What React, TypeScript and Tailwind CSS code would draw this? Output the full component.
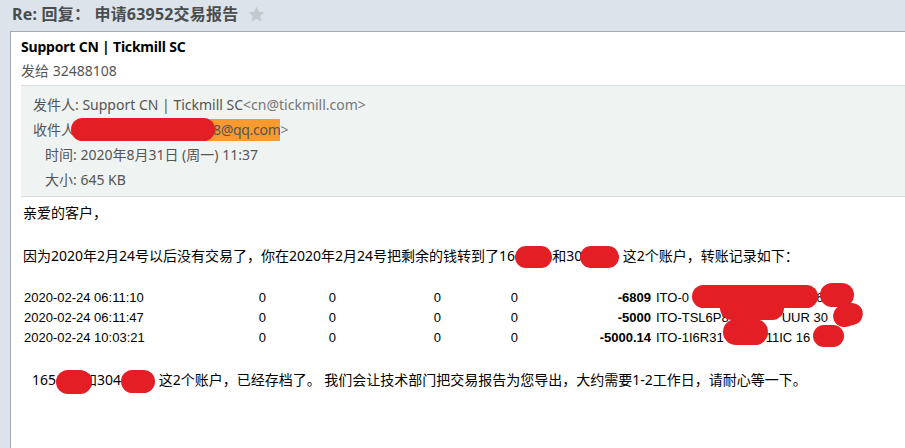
import React from 'react';

type Row = {
  time: string;
  amount: string;
  ref: React.ReactNode;
};

const ROWS: Row[] = [
  {
    time: '2020-02-24 06:11:10',
    amount: '-6809',
    ref: (
      <>
        ITO-0<span className="inline-block w-[120px]" />16
      </>
    ),
  },
  {
    time: '2020-02-24 06:11:47',
    amount: '-5000',
    ref: (
      <>
        ITO-TSL6P8<span className="inline-block w-[53px]" />UUR 30
      </>
    ),
  },
  {
    time: '2020-02-24 10:03:21',
    amount: '-5000.14',
    ref: (
      <>
        ITO-1I6R31<span className="inline-block w-[42px]" />11IC 16
      </>
    ),
  },
];

// inline red marker blob that hides part of a line
const Redact: React.FC<{ className?: string }> = ({ className = '' }) => (
  <span className={`inline-block align-middle rounded-full bg-[#e41e25] ${className}`} />
);

const StarIcon = () => (
  <svg viewBox="0 0 24 24" className="w-[17px] h-[17px]">
    <path
      d="M12 1.8l3.1 6.6 7.1.9-5.2 4.9 1.3 7.1L12 17.8l-6.3 3.5 1.3-7.1-5.2-4.9 7.1-.9z"
      fill="#c4c9ce"
      stroke="#c4c9ce"
      strokeWidth="1"
      strokeLinejoin="round"
    />
  </svg>
);

export default function App() {
  return (
    <div className="relative w-[905px] h-[448px] overflow-hidden bg-[#dce3ea] font-['Noto_Sans','Noto_Sans_CJK_SC',sans-serif] text-[14px]">
      {/* subject bar */}
      <div className="h-[31px] flex items-center pl-[12px] pb-[3px] gap-[10px]">
        <h1 className="text-[16px] font-bold text-[#4a4d50] leading-none whitespace-pre tracking-[0.2px]">Re: 回复： 申请63952交易报告</h1>
        <StarIcon />
      </div>

      {/* mail card */}
      <div className="ml-[10px] h-[417px] bg-white border-l border-t border-[#a2a9af]">
        <div className="pl-[10px] pt-[5px]">
          <div className="leading-[20px] font-bold text-black tracking-[-0.2px]">Support CN | Tickmill SC</div>
          <div className="leading-[20px] mt-[4px] text-[#555]">发给 32488108</div>
        </div>

        {/* header details */}
        <div className="ml-[10px] mt-[4px] pt-[6px] pb-[4px] bg-[#eff3f2] border-y border-[#d9dddd] text-[#555]">
          <div className="h-[25px] flex items-center pl-[12px] whitespace-pre">
            发件人: Support CN | Tickmill SC<span className="text-[#777]">&lt;cn@tickmill.com&gt;</span>
          </div>
          <div className="h-[25px] flex items-center pl-[12px] whitespace-pre">
            收件人
            <Redact className="relative z-10 w-[144px] h-[23px] -ml-[4px] -mr-[59px]" />
            <span className="h-[22px] leading-[22px] pl-[57px] bg-[#f99a30] tracking-[-0.3px]">8@qq.com</span>
            <span className="text-[#777]">&gt;</span>
          </div>
          <div className="h-[25px] flex items-center pl-[24px] whitespace-pre">时间: 2020年8月31日 (周一) 11:37</div>
          <div className="h-[25px] flex items-center pl-[24px] whitespace-pre">大小: 645 KB</div>
        </div>

        {/* body */}
        <div className="pl-[12px] pt-[6px] text-black">
          <p className="leading-[20px]">亲爱的客户，</p>
          <p className="leading-[20px] mt-[23px] whitespace-pre">
            因为2020年2月24号以后没有交易了，你在2020年2月24号把剩余的钱转到了16
            <Redact className="w-[37px] h-[22px] -my-[2px]" />
            和30
            <Redact className="w-[39px] h-[22px] -my-[2px] -ml-[2px]" /> 这2个账户，转账记录如下：
          </p>

          <div className="mt-[21px] font-['Liberation_Sans',sans-serif] text-[13px]">
            {ROWS.map(row => (
              <div
                key={row.time}
                className="h-[20px] grid grid-cols-[176px_67px_70px_105px_77px_133px_1fr] items-center whitespace-pre"
              >
                <span className="pl-[1px]">{row.time}</span>
                <span className="text-right">0</span>
                <span className="text-right">0</span>
                <span className="text-right">0</span>
                <span className="text-right">0</span>
                <span className="text-right font-bold">{row.amount}</span>
                <span className="pl-[5px]">{row.ref}</span>
              </div>
            ))}
          </div>

          <p className="leading-[20px] mt-[23px] pl-[9px] whitespace-pre">
            165
            <Redact className="relative z-10 w-[36px] h-[24px] -my-[2px] -mr-[9px]" />
            和304
            <Redact className="w-[34px] h-[23px] -my-[2px]" /> 这2个账户，已经存档了。 我们会让技术部门把交易报告为您导出，大约需要1-2工作日，请耐心等一下。
          </p>
        </div>
      </div>

      {/* redaction marks over the transfer references */}
      <span className="absolute left-[692px] top-[285px] w-[126px] h-[23px] rounded-full bg-[#e41e25]" />
      <span className="absolute left-[720px] top-[296px] w-[64px] h-[24px] rounded-full bg-[#e41e25]" />
      <span className="absolute left-[820px] top-[283px] w-[34px] h-[24px] rounded-full bg-[#e41e25]" />
      <span className="absolute left-[833px] top-[304px] w-[30px] h-[22px] rounded-full bg-[#e41e25] rotate-[-15deg]" />
      <span className="absolute left-[723px] top-[319px] w-[45px] h-[26px] rounded-full bg-[#e41e25]" />
      <span className="absolute left-[813px] top-[325px] w-[31px] h-[22px] rounded-full bg-[#e41e25]" />
    </div>
  );
}
